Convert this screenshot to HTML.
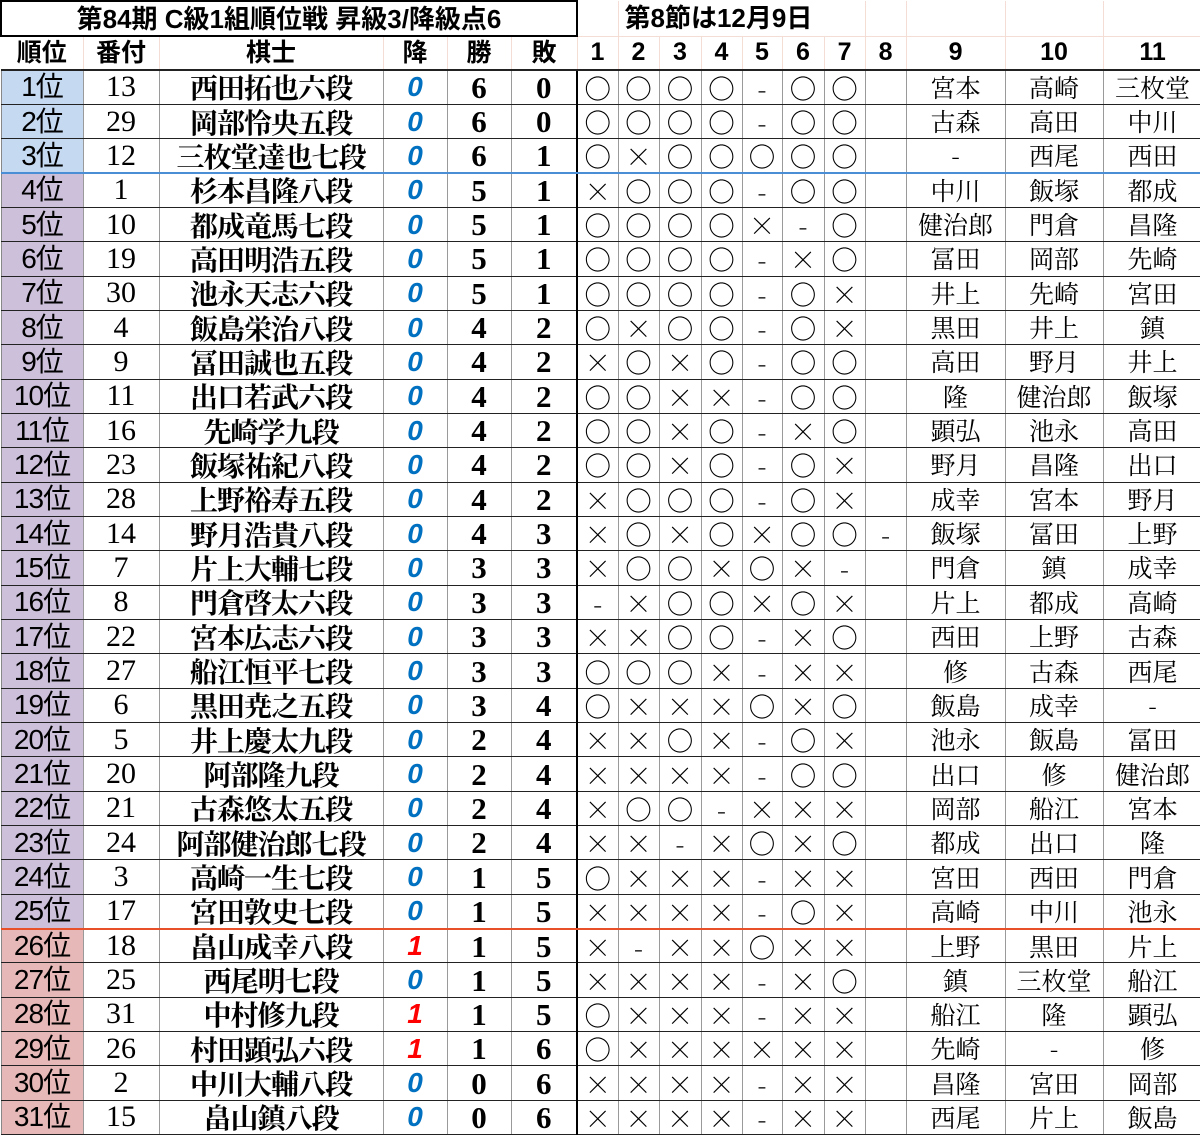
<!DOCTYPE html>
<html><head><meta charset="utf-8"><style>
html,body{margin:0;padding:0;background:#fff;width:1200px;height:1135px;overflow:hidden}
table{border-collapse:collapse;table-layout:fixed;width:1200px;position:absolute;left:0;top:0}
td{padding:0;text-align:center;vertical-align:middle;white-space:nowrap;overflow:hidden;line-height:1;box-sizing:border-box}
tr.d td{height:34.35px;border-bottom:1px solid #222;border-right:1px solid #9a9a9a;font-family:"Liberation Serif","Noto Serif CJK JP",serif;font-size:30px;color:#000}
tr.d td.rk{font-family:"Liberation Sans","Noto Sans CJK JP",sans-serif;font-size:28px;border-left:1px solid #888;letter-spacing:-1px}
tr.d td.nm{font-weight:bold;font-size:28px;font-family:"Noto Serif CJK JP","Liberation Serif",serif;letter-spacing:-1px}
tr.d td.kk{font-family:"Liberation Sans",sans-serif;font-weight:bold;font-style:italic;font-size:28px;color:#0070c0}
tr.d td.kk.r{color:#ff0000}
tr.d td.wl{font-weight:bold;font-size:31px}
tr.d td.l{border-right:2px solid #000}
tr.d td.s{font-family:"Noto Serif CJK JP",serif;font-size:27px;font-weight:300}
tr.d td.o{font-family:"Noto Serif CJK JP","Liberation Serif",serif;font-size:25px}
tr.d td.e{border-right:1px solid #222}
.b1 td.rk{background:#c5d9f1}.b2 td.rk{background:#ccc0da}.b3 td.rk{background:#e6b8b7}
tr.bl td{border-bottom:2px solid #4a8fd6 !important}
tr.rl td{border-bottom:2px solid #e8502a !important}
tr.h0 td{height:35px;border-right:1px solid #f3ddd5;border-bottom:1px solid #f3ddd5}
tr.h1 td{height:34px;font-family:"Liberation Sans","Noto Sans CJK JP",sans-serif;font-weight:bold;font-size:25px;border-right:1px solid #f3ddd5;border-bottom:2px solid #222}
.title{border:2px solid #000 !important;font-family:"Liberation Sans","Noto Sans CJK JP",sans-serif;font-weight:bold;font-size:26px}
.sub{text-align:left !important;padding-left:6px !important;font-family:"Liberation Sans","Noto Sans CJK JP",sans-serif;font-weight:bold;font-size:26px}
</style></head><body>
<table>
<colgroup><col style="width:82px"><col style="width:76px"><col style="width:224px"><col style="width:64px"><col style="width:64px"><col style="width:66px"><col style="width:41px"><col style="width:41px"><col style="width:42px"><col style="width:41px"><col style="width:40px"><col style="width:42px"><col style="width:41px"><col style="width:41px"><col style="width:99px"><col style="width:98px"><col style="width:99px"></colgroup>
<tr class="h0"><td colspan="6" class="title">第84期 C級1組順位戦 昇級3/降級点6</td><td></td><td colspan="6" class="sub">第8節は12月9日</td><td></td><td></td><td></td><td></td></tr>
<tr class="h1"><td>順位</td><td>番付</td><td>棋士</td><td>降</td><td>勝</td><td>敗</td><td>1</td><td>2</td><td>3</td><td>4</td><td>5</td><td>6</td><td>7</td><td>8</td><td>9</td><td>10</td><td>11</td></tr>
<tr class="d b1"><td class="rk">1位</td><td>13</td><td class="nm">西田拓也六段</td><td class="kk">0</td><td class="wl">6</td><td class="wl l">0</td><td class="s">○</td><td class="s">○</td><td class="s">○</td><td class="s">○</td><td class="s">-</td><td class="s">○</td><td class="s">○</td><td class="s"></td><td class="o">宮本</td><td class="o">高崎</td><td class="o e">三枚堂</td></tr>
<tr class="d b1"><td class="rk">2位</td><td>29</td><td class="nm">岡部怜央五段</td><td class="kk">0</td><td class="wl">6</td><td class="wl l">0</td><td class="s">○</td><td class="s">○</td><td class="s">○</td><td class="s">○</td><td class="s">-</td><td class="s">○</td><td class="s">○</td><td class="s"></td><td class="o">古森</td><td class="o">高田</td><td class="o e">中川</td></tr>
<tr class="d b1 bl"><td class="rk">3位</td><td>12</td><td class="nm">三枚堂達也七段</td><td class="kk">0</td><td class="wl">6</td><td class="wl l">1</td><td class="s">○</td><td class="s">×</td><td class="s">○</td><td class="s">○</td><td class="s">○</td><td class="s">○</td><td class="s">○</td><td class="s"></td><td class="o">-</td><td class="o">西尾</td><td class="o e">西田</td></tr>
<tr class="d b2"><td class="rk">4位</td><td>1</td><td class="nm">杉本昌隆八段</td><td class="kk">0</td><td class="wl">5</td><td class="wl l">1</td><td class="s">×</td><td class="s">○</td><td class="s">○</td><td class="s">○</td><td class="s">-</td><td class="s">○</td><td class="s">○</td><td class="s"></td><td class="o">中川</td><td class="o">飯塚</td><td class="o e">都成</td></tr>
<tr class="d b2"><td class="rk">5位</td><td>10</td><td class="nm">都成竜馬七段</td><td class="kk">0</td><td class="wl">5</td><td class="wl l">1</td><td class="s">○</td><td class="s">○</td><td class="s">○</td><td class="s">○</td><td class="s">×</td><td class="s">-</td><td class="s">○</td><td class="s"></td><td class="o">健治郎</td><td class="o">門倉</td><td class="o e">昌隆</td></tr>
<tr class="d b2"><td class="rk">6位</td><td>19</td><td class="nm">高田明浩五段</td><td class="kk">0</td><td class="wl">5</td><td class="wl l">1</td><td class="s">○</td><td class="s">○</td><td class="s">○</td><td class="s">○</td><td class="s">-</td><td class="s">×</td><td class="s">○</td><td class="s"></td><td class="o">冨田</td><td class="o">岡部</td><td class="o e">先崎</td></tr>
<tr class="d b2"><td class="rk">7位</td><td>30</td><td class="nm">池永天志六段</td><td class="kk">0</td><td class="wl">5</td><td class="wl l">1</td><td class="s">○</td><td class="s">○</td><td class="s">○</td><td class="s">○</td><td class="s">-</td><td class="s">○</td><td class="s">×</td><td class="s"></td><td class="o">井上</td><td class="o">先崎</td><td class="o e">宮田</td></tr>
<tr class="d b2"><td class="rk">8位</td><td>4</td><td class="nm">飯島栄治八段</td><td class="kk">0</td><td class="wl">4</td><td class="wl l">2</td><td class="s">○</td><td class="s">×</td><td class="s">○</td><td class="s">○</td><td class="s">-</td><td class="s">○</td><td class="s">×</td><td class="s"></td><td class="o">黒田</td><td class="o">井上</td><td class="o e">鎮</td></tr>
<tr class="d b2"><td class="rk">9位</td><td>9</td><td class="nm">冨田誠也五段</td><td class="kk">0</td><td class="wl">4</td><td class="wl l">2</td><td class="s">×</td><td class="s">○</td><td class="s">×</td><td class="s">○</td><td class="s">-</td><td class="s">○</td><td class="s">○</td><td class="s"></td><td class="o">高田</td><td class="o">野月</td><td class="o e">井上</td></tr>
<tr class="d b2"><td class="rk">10位</td><td>11</td><td class="nm">出口若武六段</td><td class="kk">0</td><td class="wl">4</td><td class="wl l">2</td><td class="s">○</td><td class="s">○</td><td class="s">×</td><td class="s">×</td><td class="s">-</td><td class="s">○</td><td class="s">○</td><td class="s"></td><td class="o">隆</td><td class="o">健治郎</td><td class="o e">飯塚</td></tr>
<tr class="d b2"><td class="rk">11位</td><td>16</td><td class="nm">先崎学九段</td><td class="kk">0</td><td class="wl">4</td><td class="wl l">2</td><td class="s">○</td><td class="s">○</td><td class="s">×</td><td class="s">○</td><td class="s">-</td><td class="s">×</td><td class="s">○</td><td class="s"></td><td class="o">顕弘</td><td class="o">池永</td><td class="o e">高田</td></tr>
<tr class="d b2"><td class="rk">12位</td><td>23</td><td class="nm">飯塚祐紀八段</td><td class="kk">0</td><td class="wl">4</td><td class="wl l">2</td><td class="s">○</td><td class="s">○</td><td class="s">×</td><td class="s">○</td><td class="s">-</td><td class="s">○</td><td class="s">×</td><td class="s"></td><td class="o">野月</td><td class="o">昌隆</td><td class="o e">出口</td></tr>
<tr class="d b2"><td class="rk">13位</td><td>28</td><td class="nm">上野裕寿五段</td><td class="kk">0</td><td class="wl">4</td><td class="wl l">2</td><td class="s">×</td><td class="s">○</td><td class="s">○</td><td class="s">○</td><td class="s">-</td><td class="s">○</td><td class="s">×</td><td class="s"></td><td class="o">成幸</td><td class="o">宮本</td><td class="o e">野月</td></tr>
<tr class="d b2"><td class="rk">14位</td><td>14</td><td class="nm">野月浩貴八段</td><td class="kk">0</td><td class="wl">4</td><td class="wl l">3</td><td class="s">×</td><td class="s">○</td><td class="s">×</td><td class="s">○</td><td class="s">×</td><td class="s">○</td><td class="s">○</td><td class="s">-</td><td class="o">飯塚</td><td class="o">冨田</td><td class="o e">上野</td></tr>
<tr class="d b2"><td class="rk">15位</td><td>7</td><td class="nm">片上大輔七段</td><td class="kk">0</td><td class="wl">3</td><td class="wl l">3</td><td class="s">×</td><td class="s">○</td><td class="s">○</td><td class="s">×</td><td class="s">○</td><td class="s">×</td><td class="s">-</td><td class="s"></td><td class="o">門倉</td><td class="o">鎮</td><td class="o e">成幸</td></tr>
<tr class="d b2"><td class="rk">16位</td><td>8</td><td class="nm">門倉啓太六段</td><td class="kk">0</td><td class="wl">3</td><td class="wl l">3</td><td class="s">-</td><td class="s">×</td><td class="s">○</td><td class="s">○</td><td class="s">×</td><td class="s">○</td><td class="s">×</td><td class="s"></td><td class="o">片上</td><td class="o">都成</td><td class="o e">高崎</td></tr>
<tr class="d b2"><td class="rk">17位</td><td>22</td><td class="nm">宮本広志六段</td><td class="kk">0</td><td class="wl">3</td><td class="wl l">3</td><td class="s">×</td><td class="s">×</td><td class="s">○</td><td class="s">○</td><td class="s">-</td><td class="s">×</td><td class="s">○</td><td class="s"></td><td class="o">西田</td><td class="o">上野</td><td class="o e">古森</td></tr>
<tr class="d b2"><td class="rk">18位</td><td>27</td><td class="nm">船江恒平七段</td><td class="kk">0</td><td class="wl">3</td><td class="wl l">3</td><td class="s">○</td><td class="s">○</td><td class="s">○</td><td class="s">×</td><td class="s">-</td><td class="s">×</td><td class="s">×</td><td class="s"></td><td class="o">修</td><td class="o">古森</td><td class="o e">西尾</td></tr>
<tr class="d b2"><td class="rk">19位</td><td>6</td><td class="nm">黒田尭之五段</td><td class="kk">0</td><td class="wl">3</td><td class="wl l">4</td><td class="s">○</td><td class="s">×</td><td class="s">×</td><td class="s">×</td><td class="s">○</td><td class="s">×</td><td class="s">○</td><td class="s"></td><td class="o">飯島</td><td class="o">成幸</td><td class="o e">-</td></tr>
<tr class="d b2"><td class="rk">20位</td><td>5</td><td class="nm">井上慶太九段</td><td class="kk">0</td><td class="wl">2</td><td class="wl l">4</td><td class="s">×</td><td class="s">×</td><td class="s">○</td><td class="s">×</td><td class="s">-</td><td class="s">○</td><td class="s">×</td><td class="s"></td><td class="o">池永</td><td class="o">飯島</td><td class="o e">冨田</td></tr>
<tr class="d b2"><td class="rk">21位</td><td>20</td><td class="nm">阿部隆九段</td><td class="kk">0</td><td class="wl">2</td><td class="wl l">4</td><td class="s">×</td><td class="s">×</td><td class="s">×</td><td class="s">×</td><td class="s">-</td><td class="s">○</td><td class="s">○</td><td class="s"></td><td class="o">出口</td><td class="o">修</td><td class="o e">健治郎</td></tr>
<tr class="d b2"><td class="rk">22位</td><td>21</td><td class="nm">古森悠太五段</td><td class="kk">0</td><td class="wl">2</td><td class="wl l">4</td><td class="s">×</td><td class="s">○</td><td class="s">○</td><td class="s">-</td><td class="s">×</td><td class="s">×</td><td class="s">×</td><td class="s"></td><td class="o">岡部</td><td class="o">船江</td><td class="o e">宮本</td></tr>
<tr class="d b2"><td class="rk">23位</td><td>24</td><td class="nm">阿部健治郎七段</td><td class="kk">0</td><td class="wl">2</td><td class="wl l">4</td><td class="s">×</td><td class="s">×</td><td class="s">-</td><td class="s">×</td><td class="s">○</td><td class="s">×</td><td class="s">○</td><td class="s"></td><td class="o">都成</td><td class="o">出口</td><td class="o e">隆</td></tr>
<tr class="d b2"><td class="rk">24位</td><td>3</td><td class="nm">高崎一生七段</td><td class="kk">0</td><td class="wl">1</td><td class="wl l">5</td><td class="s">○</td><td class="s">×</td><td class="s">×</td><td class="s">×</td><td class="s">-</td><td class="s">×</td><td class="s">×</td><td class="s"></td><td class="o">宮田</td><td class="o">西田</td><td class="o e">門倉</td></tr>
<tr class="d b2 rl"><td class="rk">25位</td><td>17</td><td class="nm">宮田敦史七段</td><td class="kk">0</td><td class="wl">1</td><td class="wl l">5</td><td class="s">×</td><td class="s">×</td><td class="s">×</td><td class="s">×</td><td class="s">-</td><td class="s">○</td><td class="s">×</td><td class="s"></td><td class="o">高崎</td><td class="o">中川</td><td class="o e">池永</td></tr>
<tr class="d b3"><td class="rk">26位</td><td>18</td><td class="nm">畠山成幸八段</td><td class="kk r">1</td><td class="wl">1</td><td class="wl l">5</td><td class="s">×</td><td class="s">-</td><td class="s">×</td><td class="s">×</td><td class="s">○</td><td class="s">×</td><td class="s">×</td><td class="s"></td><td class="o">上野</td><td class="o">黒田</td><td class="o e">片上</td></tr>
<tr class="d b3"><td class="rk">27位</td><td>25</td><td class="nm">西尾明七段</td><td class="kk">0</td><td class="wl">1</td><td class="wl l">5</td><td class="s">×</td><td class="s">×</td><td class="s">×</td><td class="s">×</td><td class="s">-</td><td class="s">×</td><td class="s">○</td><td class="s"></td><td class="o">鎮</td><td class="o">三枚堂</td><td class="o e">船江</td></tr>
<tr class="d b3"><td class="rk">28位</td><td>31</td><td class="nm">中村修九段</td><td class="kk r">1</td><td class="wl">1</td><td class="wl l">5</td><td class="s">○</td><td class="s">×</td><td class="s">×</td><td class="s">×</td><td class="s">-</td><td class="s">×</td><td class="s">×</td><td class="s"></td><td class="o">船江</td><td class="o">隆</td><td class="o e">顕弘</td></tr>
<tr class="d b3"><td class="rk">29位</td><td>26</td><td class="nm">村田顕弘六段</td><td class="kk r">1</td><td class="wl">1</td><td class="wl l">6</td><td class="s">○</td><td class="s">×</td><td class="s">×</td><td class="s">×</td><td class="s">×</td><td class="s">×</td><td class="s">×</td><td class="s"></td><td class="o">先崎</td><td class="o">-</td><td class="o e">修</td></tr>
<tr class="d b3"><td class="rk">30位</td><td>2</td><td class="nm">中川大輔八段</td><td class="kk">0</td><td class="wl">0</td><td class="wl l">6</td><td class="s">×</td><td class="s">×</td><td class="s">×</td><td class="s">×</td><td class="s">-</td><td class="s">×</td><td class="s">×</td><td class="s"></td><td class="o">昌隆</td><td class="o">宮田</td><td class="o e">岡部</td></tr>
<tr class="d b3"><td class="rk">31位</td><td>15</td><td class="nm">畠山鎮八段</td><td class="kk">0</td><td class="wl">0</td><td class="wl l">6</td><td class="s">×</td><td class="s">×</td><td class="s">×</td><td class="s">×</td><td class="s">-</td><td class="s">×</td><td class="s">×</td><td class="s"></td><td class="o">西尾</td><td class="o">片上</td><td class="o e">飯島</td></tr>
</table>
</body></html>
